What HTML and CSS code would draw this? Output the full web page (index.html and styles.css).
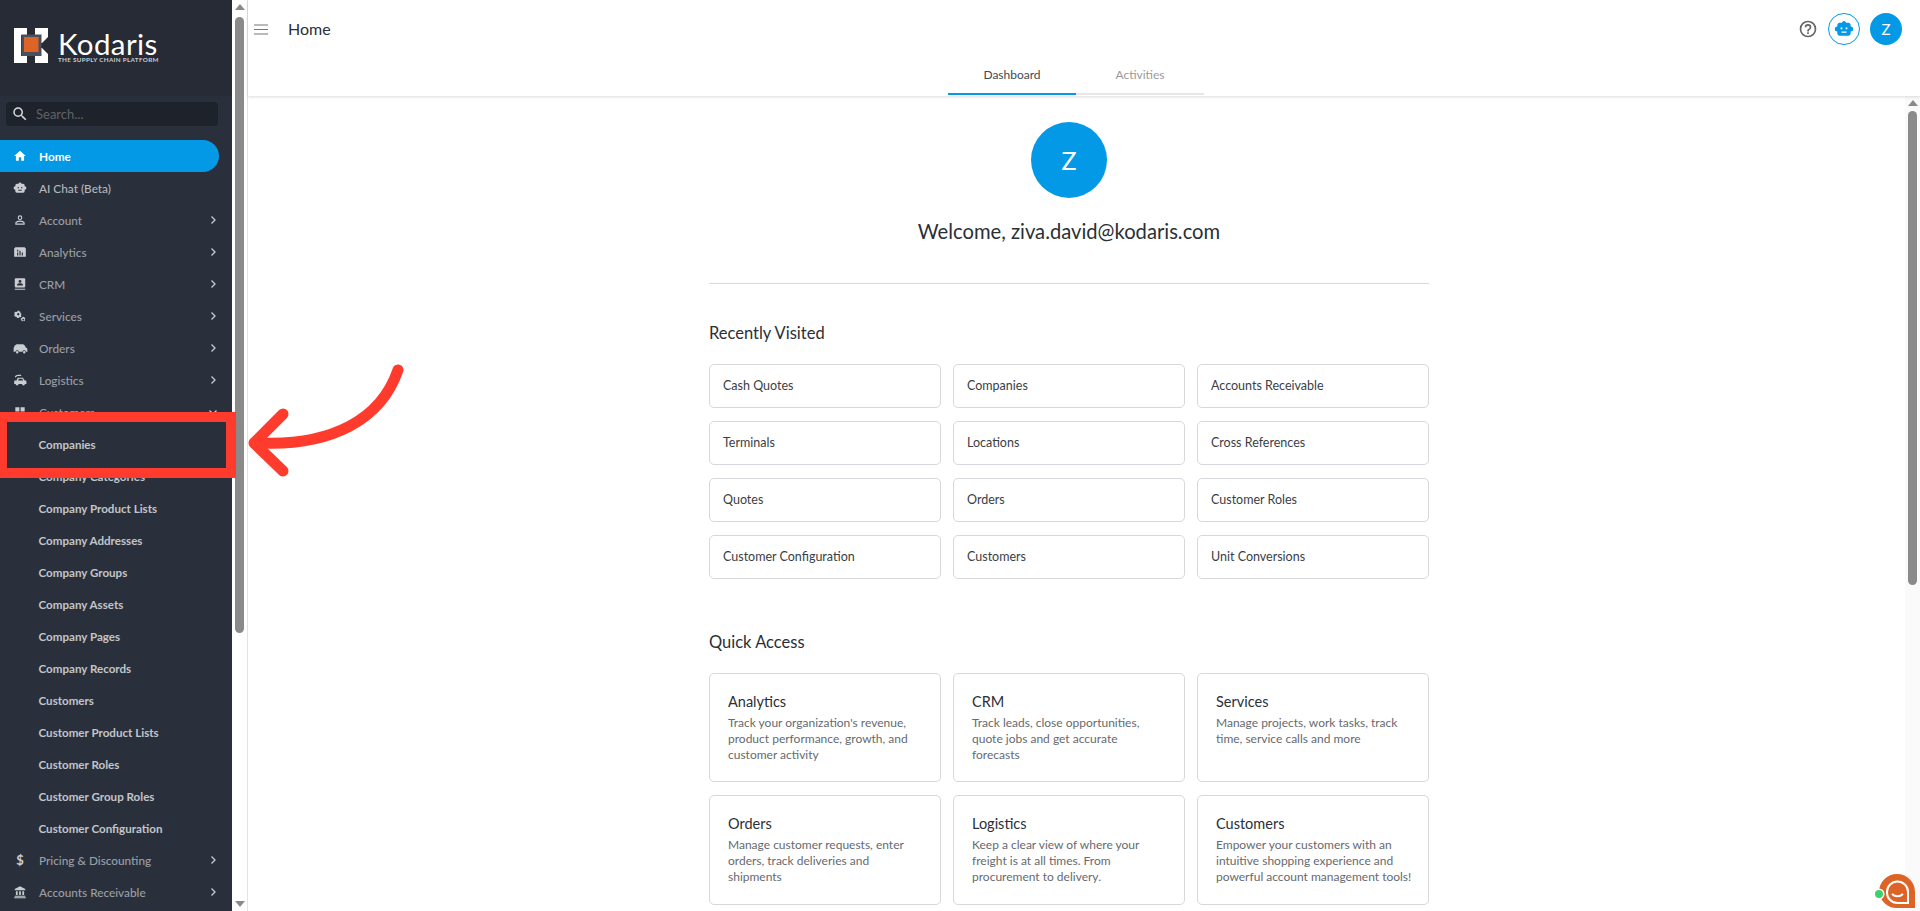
FILE: index.html
```html
<!DOCTYPE html>
<html lang="en">
<head>
<meta charset="utf-8">
<title>Home</title>
<link rel="stylesheet" href="styles.css">
</head>
<body>
<svg class="defs" width="0" height="0" aria-hidden="true">
  <symbol id="chev" viewBox="0 0 24 24"><path d="M9 5l7 7-7 7" fill="none" stroke="currentColor" stroke-width="2.6"/></symbol>
  <symbol id="robot" viewBox="0 0 24 24"><path d="M12 2.500a2.600 2.600 0 0 1 2.500 2H17a3 3 0 0 1 3 3V9a3 3 0 0 1 0 6v2.500a2.500 2.500 0 0 1-2.500 2.500h-11A2.500 2.500 0 0 1 4 17.500V15a3 3 0 0 1 0-6V7.500a3 3 0 0 1 3-3h2.500a2.600 2.600 0 0 1 2.500-2zM8 10.200v2.200h2v-2.200zm6 0v2.200h2v-2.200zM9 15v1.500h6V15z" fill="currentColor" fill-rule="evenodd"/></symbol>
</svg>
<div class="app">
  <aside class="sidebar">
    <div class="logo">
      <svg class="logo-mark" viewBox="0 0 35 35" width="35" height="35" aria-hidden="true">
        <path d="M0 0H13V7H7V28H13V35H0zM21 0H34V9L28 15H27V7H21zM21 35H34V26L28 20H27V28H21z" fill="#fff"/>
        <rect x="7.500" y="6.500" width="20" height="21.500" fill="#4a505b"/>
        <rect x="10" y="9" width="14.500" height="15" fill="#dd6327"/>
      </svg>
      <div class="logo-text">
        <span class="logo-name">Kodaris</span>
        <span class="logo-tag">THE SUPPLY CHAIN PLATFORM</span>
      </div>
    </div>
    <div class="search-wrap">
      <div class="search">
        <svg viewBox="0 0 24 24" width="18" height="18" aria-hidden="true"><path d="M15.500 14h-.79l-.28-.27A6.470 6.470 0 0 0 16 9.500 6.500 6.500 0 1 0 9.500 16c1.610 0 3.090-.59 4.230-1.570l.27.28v.79l5 4.990L20.490 19l-4.990-5zm-6 0C7.010 14 5 11.990 5 9.500S7.010 5 9.500 5 14 7.010 14 9.500 11.990 14 9.500 14z" fill="#d5dae0"/></svg>
        <span>Search...</span>
      </div>
    </div>
    <nav class="nav">
      <a class="item active"><svg class="ic" viewBox="0 0 24 24"><path d="M10 20v-6h4v6h5v-8h3L12 3 2 12h3v8z"/></svg><span>Home</span></a>
      <a class="item bright"><svg class="ic" viewBox="0 0 24 24"><use href="#robot"/></svg><span>AI Chat (Beta)</span></a>
      <a class="item"><svg class="ic" viewBox="0 0 24 24"><path d="M12 5.900a2.100 2.100 0 1 1 0 4.200 2.100 2.100 0 0 1 0-4.200m0 9c2.970 0 6.100 1.460 6.100 2.100v1.100H5.900V17c0-.64 3.130-2.100 6.100-2.100M12 4a4 4 0 1 0 0 8 4 4 0 0 0 0-8zm0 9c-2.670 0-8 1.340-8 4v3h16v-3c0-2.660-5.330-4-8-4z"/></svg><span>Account</span><svg class="chev"><use href="#chev"/></svg></a>
      <a class="item"><svg class="ic" viewBox="0 0 24 24"><path d="M2 6l2-2h16l2 2v14H2zm5 7v5h2v-5zm4-3v8h2v-8zm4 3v5h2v-5zM7 8v3h2V8z" fill-rule="evenodd"/></svg><span>Analytics</span><svg class="chev"><use href="#chev"/></svg></a>
      <a class="item"><svg class="ic" viewBox="0 0 24 24"><path d="M5 2h14a2 2 0 0 1 2 2v12a2 2 0 0 1-2 2H5a2 2 0 0 1-2-2V4a2 2 0 0 1 2-2zm7 3a2.500 2.500 0 1 0 0 5 2.500 2.500 0 0 0 0-5zm-5 9.500h10V13c0-1.600-3.300-2.400-5-2.400S7 11.400 7 13zM3 20h18v2H3z" fill-rule="evenodd"/></svg><span>CRM</span><svg class="chev"><use href="#chev"/></svg></a>
      <a class="item"><svg class="ic" viewBox="0 0 24 24"><path d="M9 2l1.200 2 2.500.5V7l2 1.500-1.200 2.400 1 2-2 1.600-1.500-.8-1.500 1.800H7l-.8-1.800L3.500 13 2 11l1-2.400L2 6.500 4.500 4.500l2 .5zm0 5a2 2 0 1 0 0 4 2 2 0 0 0 0-4zM18 13l.8 1.500 1.700.2.500 1.800-1 1.300.6 1.700-1.400 1.300-1.700-.6-1.300 1-1.600-.8-.1-1.800-1.400-1 .6-1.800 1.700-.4.8-1.400zm-.5 3.500a1.500 1.500 0 1 0 0 3 1.500 1.500 0 0 0 0-3z" fill-rule="evenodd"/></svg><span>Services</span><svg class="chev"><use href="#chev"/></svg></a>
      <a class="item"><svg class="ic ic-wide" viewBox="0 0 24 24"><path d="M7 5h8c1.800 0 3 .9 3.800 2.200l1.700 3.300c1.500.4 2.500 1.300 2.500 3V17h-2.300a3 3 0 0 0-5.700 0H9.500a3 3 0 0 0-5.700 0H1v-3.500C1 9 3.500 5 7 5zM6.700 16a2 2 0 1 1 0 4 2 2 0 0 1 0-4zm11.300 0a2 2 0 1 1 0 4 2 2 0 0 1 0-4z"/></svg><span class="orders-label">Orders</span><svg class="chev"><use href="#chev"/></svg></a>
      <a class="item"><svg class="ic" viewBox="0 0 24 24"><path d="M3 7c1-2.500 3.500-4 6-4h5v2H9C7 5 5.500 6 5 7.500zM8 8h9l3 5h1.500a1.500 1.500 0 0 1 1.500 1.500V19h-2.500a2.500 2.500 0 0 1-5 0H9.500a2.500 2.500 0 0 1-5 0H2v-5.500L3 13h3zm2 2-1.200 3h8.700l-1.800-3z" fill-rule="evenodd"/></svg><span>Logistics</span><svg class="chev"><use href="#chev"/></svg></a>
      <a class="item"><svg class="ic" viewBox="0 0 24 24"><path d="M4 4h7v7H4zM13 4h7v7h-7zM4 13h7v7H4zM13 13h7v7h-7z"/></svg><span>Customers</span><svg class="chev down"><use href="#chev"/></svg></a>
      <a class="item child">Companies</a>
      <a class="item child">Company Categories</a>
      <a class="item child">Company Product Lists</a>
      <a class="item child">Company Addresses</a>
      <a class="item child">Company Groups</a>
      <a class="item child">Company Assets</a>
      <a class="item child">Company Pages</a>
      <a class="item child">Company Records</a>
      <a class="item child">Customers</a>
      <a class="item child">Customer Product Lists</a>
      <a class="item child">Customer Roles</a>
      <a class="item child">Customer Group Roles</a>
      <a class="item child">Customer Configuration</a>
      <a class="item"><span class="ic dollar">$</span><span>Pricing &amp; Discounting</span><svg class="chev"><use href="#chev"/></svg></a>
      <a class="item"><svg class="ic" viewBox="0 0 24 24"><path d="M12 2l9 5v2H3V7zM5 10.500h3V17H5zM10.500 10.500h3V17h-3zM16 10.500h3V17h-3zM3 18.500h18V20H3zM2 21h20v1.500H2z"/></svg><span>Accounts Receivable</span><svg class="chev"><use href="#chev"/></svg></a>
    </nav>
  </aside>

  <div class="scrollbar side-bar">
    <i class="tri up"></i>
    <b class="thumb side-thumb"></b>
    <i class="spacer"></i>
    <i class="tri dn"></i>
  </div>

  <main class="main">
    <header class="header">
      <div class="topbar">
        <svg class="menu" viewBox="0 0 14 11" width="14" height="11" aria-hidden="true"><path d="M0 1h14M0 5.500h14M0 10h14" stroke="#777" stroke-width="1.100" fill="none"/></svg>
        <h1 class="title">Home</h1>
        <div class="top-actions">
          <svg class="help" viewBox="0 0 24 24" width="20" height="20" aria-hidden="true"><path d="M11 18h2v-2h-2zm1-16a10 10 0 1 0 0 20 10 10 0 0 0 0-20zm0 18a8 8 0 1 1 0-16 8 8 0 0 1 0 16zm0-14a4 4 0 0 0-4 4h2a2 2 0 1 1 4 0c0 2-3 1.750-3 5h2c0-2.250 3-2.500 3-5a4 4 0 0 0-4-4z" fill="#666"/></svg>
          <span class="robot-btn"><svg viewBox="0 0 24 24" width="20" height="20"><use href="#robot"/></svg></span>
          <span class="avatar-sm">Z</span>
        </div>
      </div>
      <div class="tabs">
        <span class="tab on">Dashboard</span>
        <span class="tab">Activities</span>
      </div>
    </header>
    <div class="body-row">
      <section class="content">
        <div class="avatar-lg">Z</div>
        <p class="welcome">Welcome, ziva.david@kodaris.com</p>
        <hr class="rule">
        <h2 class="sec recent">Recently Visited</h2>
        <div class="links">
          <a class="link">Cash Quotes</a><a class="link">Companies</a><a class="link">Accounts Receivable</a>
          <a class="link">Terminals</a><a class="link">Locations</a><a class="link">Cross References</a>
          <a class="link">Quotes</a><a class="link">Orders</a><a class="link">Customer Roles</a>
          <a class="link">Customer Configuration</a><a class="link">Customers</a><a class="link">Unit Conversions</a>
        </div>
        <h2 class="sec quick">Quick Access</h2>
        <div class="cards">
          <article class="card"><h3>Analytics</h3><p>Track your organization's revenue,<br>product performance, growth, and<br>customer activity</p></article>
          <article class="card"><h3>CRM</h3><p>Track leads, close opportunities,<br>quote jobs and get accurate<br>forecasts</p></article>
          <article class="card"><h3>Services</h3><p>Manage projects, work tasks, track<br>time, service calls and more</p></article>
          <article class="card"><h3>Orders</h3><p>Manage customer requests, enter<br>orders, track deliveries and<br>shipments</p></article>
          <article class="card"><h3>Logistics</h3><p>Keep a clear view of where your<br>freight is at all times. From<br>procurement to delivery.</p></article>
          <article class="card"><h3>Customers</h3><p>Empower your customers with an<br>intuitive shopping experience and<br>powerful account management tools!</p></article>
        </div>
      </section>
      <div class="scrollbar main-bar">
        <i class="tri up"></i>
        <b class="thumb main-thumb"></b>
      </div>
    </div>
  </main>
</div>

<div class="callout" aria-hidden="true"></div>
<svg class="arrow" viewBox="0 0 170 125" width="170" height="125" aria-hidden="true">
  <path d="M152 10C135 60 85 86 14 83" fill="none" stroke="#ff3b2d" stroke-width="11" stroke-linecap="round"/>
  <path d="M37 54L8 83l29 28" fill="none" stroke="#ff3b2d" stroke-width="11" stroke-linecap="round" stroke-linejoin="round"/>
</svg>

<div class="chat" aria-hidden="true">
  <svg viewBox="0 0 42 41" width="42" height="41">
    <path d="M5 22a18 18 0 0 1 36 0V38H23A18 18 0 0 1 5 22z" fill="#dd6327"/>
    <path d="M13 22a10.500 10.500 0 0 1 21 0V33H23.500A10.500 10.500 0 0 1 13 22z" fill="none" stroke="#fff" stroke-width="2"/>
    <path d="M18 24c3 3 8 3 11 0" fill="none" stroke="#fff" stroke-width="2"/>
    <circle cx="5" cy="24" r="5.500" fill="#fff"/>
    <circle cx="5" cy="24" r="4" fill="#3ecf6e"/>
  </svg>
</div>
</body>
</html>
```

FILE: styles.css
```css
* { box-sizing: border-box; }
html, body { margin: 0; height: 911px; overflow: hidden; background: #fff; }
body { font-family: "Lato", "Open Sans", sans-serif; color: #2b2f36; position: relative; }
.defs { position: absolute; }
.app { display: flex; width: 1920px; height: 911px; }

/* sidebar */
.sidebar { width: 232px; flex: none; background: #2a303b; height: 911px; overflow: hidden; display: flex; flex-direction: column; }
.logo { height: 96px; flex: none; background: #262b35; display: flex; align-items: flex-start; padding: 28px 0 0 14px; gap: 9px; }
.logo-mark { flex: none; }
.logo-text { display: flex; flex-direction: column; margin-top: 3px; }
.logo-name { color: #fff; font-size: 29.500px; line-height: 26px; letter-spacing: .4px; }
.logo-tag { color: #c9ccd1; font-size: 6.300px; line-height: 8px; font-weight: 700; letter-spacing: .32px; white-space: nowrap; margin-top: -1px; }
.search-wrap { padding: 6px 14px 15px 6px; flex: none; }
.search { height: 24px; background: #1e222a; border-radius: 4px; display: flex; align-items: center; padding-left: 5px; gap: 7px; color: #5e636b; font-size: 13px; }
.nav { display: flex; flex-direction: column; margin-top: -1px; }
.item { height: 32px; flex: none; display: flex; align-items: center; color: #9b9fa6; font-size: 11.800px; font-weight: 500; padding-left: 13px; position: relative; }
.item > span:not(.ic) { margin-left: 12px; }
.item > span.orders-label { margin-left: 11px; }
.ic { width: 14px; height: 14px; fill: #c9ccd1; color: #c9ccd1; flex: none; }
.ic-wide { width: 15px; height: 15px; }
.dollar { font-size: 13px; font-weight: 700; text-align: center; line-height: 14px; }
.chev { position: absolute; left: 207px; top: 10px; width: 12px; height: 12px; color: #c9ccd1; }
.chev.down { transform: rotate(90deg); }
.active { background: #0399e6; color: #fff; font-weight: 700; width: 219px; border-radius: 0 16px 16px 0; }
.active .ic { fill: #fff; }
.bright { color: #b4b7bc; }
.child { padding-left: 38.500px; color: #c2c5ca; font-weight: 700; font-size: 11.600px; }

/* scrollbars */
.scrollbar { flex: none; width: 15px; display: flex; flex-direction: column; align-items: center; }
.side-bar { height: 911px; background: #fff; padding: 4px 0; }
.main-bar { background: #fafafa; padding-top: 4px; }
.tri { display: block; width: 0; height: 0; border-left: 5px solid transparent; border-right: 5px solid transparent; flex: none; }
.up { border-bottom: 6px solid #8a8a8a; }
.dn { border-top: 6px solid #8a8a8a; }
.thumb { display: block; width: 9px; background: #8a8a8a; border-radius: 5px; flex: none; }
.side-thumb { height: 616px; margin-top: 7px; }
.main-thumb { height: 474px; margin-top: 5px; }
.spacer { flex: 1; }

/* main */
.main { flex: 1; min-width: 0; border-left: 1px solid #e3e3e3; display: flex; flex-direction: column; height: 911px; }
.header { height: 96px; flex: none; box-shadow: 0 1px 3px rgba(0,0,0,.14); position: relative; background: #fff; display: flex; flex-direction: column; }
.topbar { height: 58px; display: flex; align-items: center; padding: 0 18px 0 6px; flex: none; }
.menu { flex: none; }
.title { margin: 0 0 2px 20px; font-size: 16px; font-weight: 400; color: #2b2f36; }
.top-actions { margin-left: auto; display: flex; align-items: center; gap: 10px; }
.robot-btn { width: 32px; height: 32px; border: 1.500px solid #0399e6; border-radius: 50%; color: #0399e6; display: flex; align-items: center; justify-content: center; fill: #0399e6; }
.avatar-sm { width: 32px; height: 32px; border-radius: 50%; background: #0399e6; color: #fff; display: flex; align-items: center; justify-content: center; font-size: 15px; }
.tabs { display: flex; justify-content: center; padding-right: 16px; height: 37px; }
.tab { width: 128px; text-align: center; font-size: 12px; color: #9a9a9a; border-bottom: 2px solid #e6e6e6; padding-top: 9px; }
.tab.on { color: #44484f; border-bottom-color: #0399e6; }

.body-row { flex: 1; min-height: 0; display: flex; }
.content { flex: 1; min-width: 0; padding: 26px 0 0 461px; overflow: hidden; }
.avatar-lg { width: 76px; height: 76px; border-radius: 50%; background: #0399e6; color: #fff; margin-left: 322px; display: flex; align-items: center; justify-content: center; font-size: 25px; }
.welcome { width: 720px; text-align: center; margin: 19px 0 0; font-size: 20.200px; line-height: 28px; color: #2b2f36; }
.rule { width: 720px; margin: 38px 0 0; border: 0; border-top: 1px solid #d9d9d9; }
.sec { margin: 0; font-size: 16.500px; font-weight: 400; line-height: 24px; color: #2b2f36; }
.recent { margin-top: 37px; }
.quick { margin-top: 51px; }
.links { width: 720px; display: grid; grid-template-columns: repeat(3, 232px); column-gap: 12px; row-gap: 13px; margin-top: 19px; }
.link { height: 44px; border: 1px solid #d8d8dc; border-radius: 5px; display: flex; align-items: center; padding: 0 0 1px 13px; font-size: 12.500px; color: #3a3e45; }
.cards { width: 720px; display: grid; grid-template-columns: repeat(3, 232px); grid-template-rows: 109px 110px; column-gap: 12px; row-gap: 13px; margin-top: 19px; }
.card { border: 1px solid #d8d8dc; border-radius: 5px; padding: 19px 3px 0 18px; }
.card h3 { margin: 0; font-size: 14.500px; font-weight: 400; line-height: 18px; color: #2b2f36; }
.card p { margin: 4px 0 0; font-size: 12px; line-height: 16px; color: #666a70; white-space: nowrap; }

/* overlays */
.callout { position: absolute; left: -3px; top: 412px; width: 239px; height: 66px; border: 10px solid #ff3b2d; }
.arrow { position: absolute; left: 246px; top: 360px; }
.chat { position: absolute; left: 1874px; top: 870px; width: 42px; height: 41px; }
```
